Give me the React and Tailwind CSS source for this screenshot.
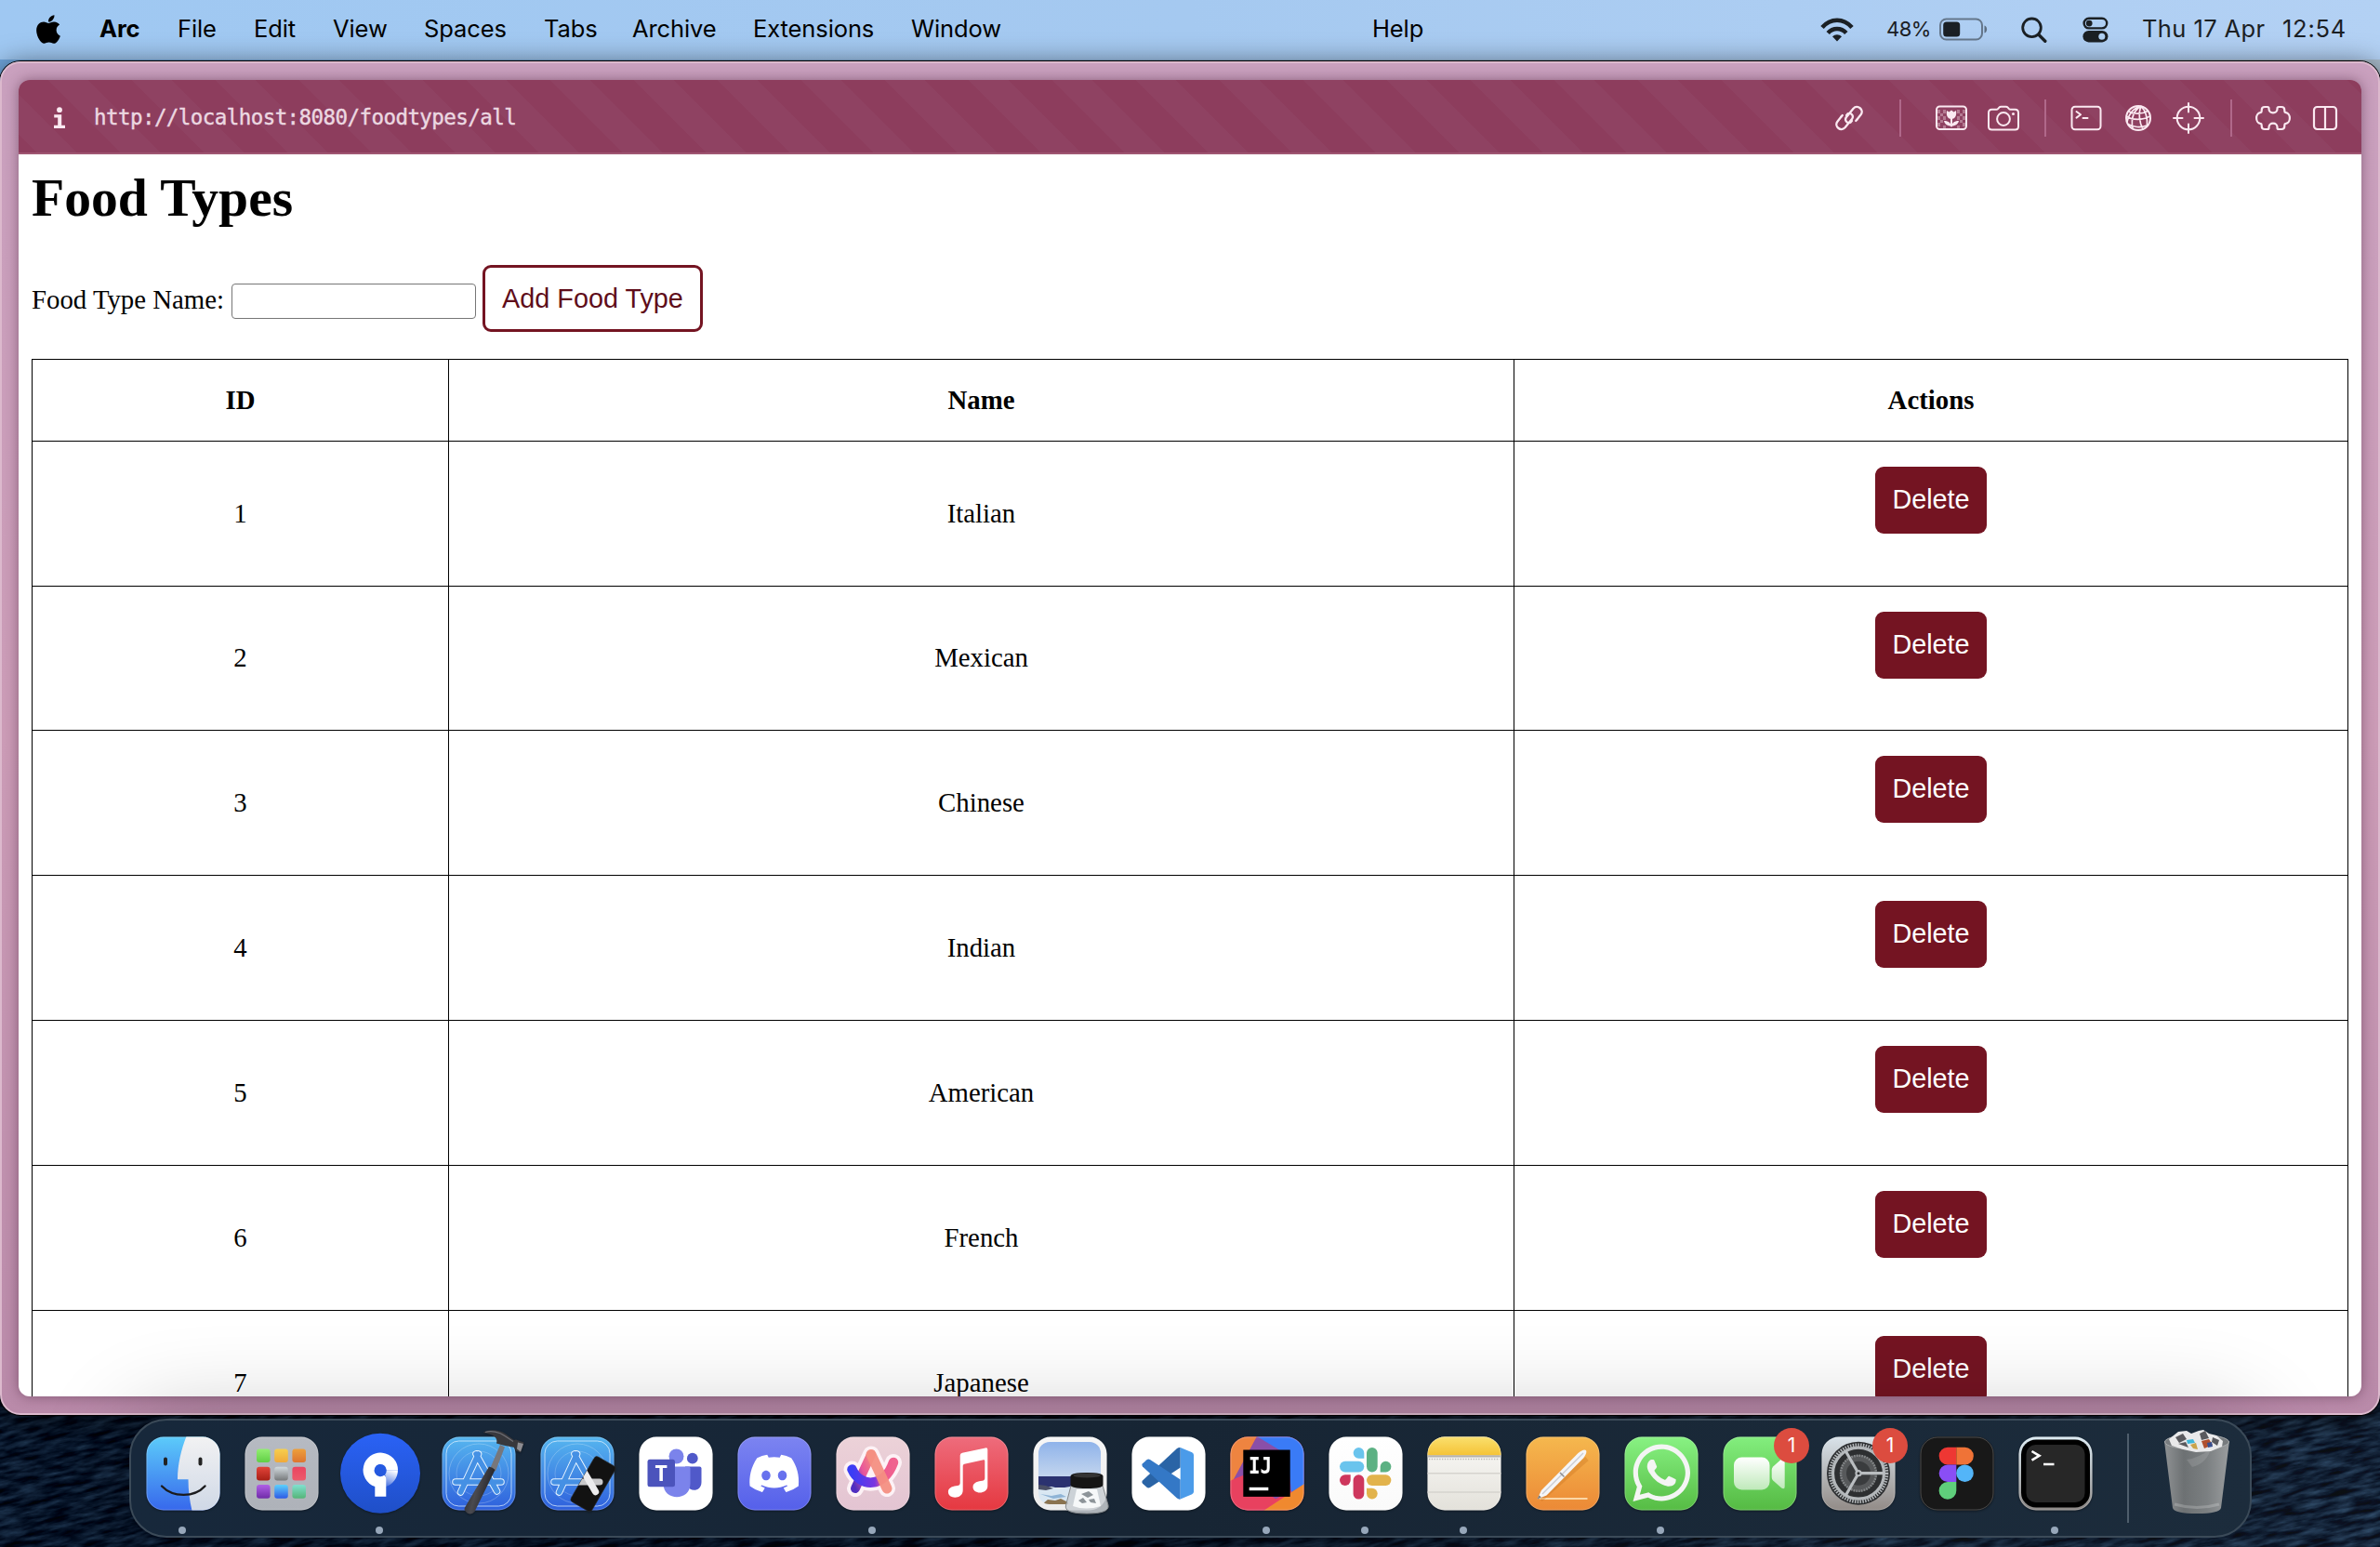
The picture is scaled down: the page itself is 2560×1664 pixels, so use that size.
import React from "react";
import { FaApple, FaWhatsapp, FaDiscord } from "react-icons/fa";

const menus = [
  ["Arc", "w-[84px] font-bold"],
  ["File", "w-[82px]"],
  ["Edit", "w-[85px]"],
  ["View", "w-[98px]"],
  ["Spaces", "w-[129px]"],
  ["Tabs", "w-[95px]"],
  ["Archive", "w-[130px]"],
  ["Extensions", "w-[170px]"],
  ["Window", "w-[496px]"],
  ["Help", "w-[60px]"],
];

const rows = [
  [1, "Italian", "h-[156px]"],
  [2, "Mexican", "h-[155px]"],
  [3, "Chinese", "h-[156px]"],
  [4, "Indian", "h-[156px]"],
  [5, "American", "h-[156px]"],
  [6, "French", "h-[156px]"],
  [7, "Japanese", "h-[156px]"],
];

function MenuBar() {
  return (
    <div className="flex h-[64px] shrink-0 items-center bg-linear-to-r from-[#9fc8f2] via-[#a5c9f0] to-[#b3d1f4] pl-[38px] text-[25.5px] text-black">
      <FaApple className="mr-[41px] h-[35px] w-[28px] -translate-y-px" />
      {menus.map(([label, cls]) => (
        <div key={label} className={"whitespace-nowrap pb-[2px] leading-[60px] tracking-[-0.1px] " + cls}>
          {label}
        </div>
      ))}
      <div className="ml-auto flex items-center pb-px text-[#1b2024]">
        <svg className="h-[28px] w-[36px]" viewBox="0 0 36 28" fill="none" stroke="currentColor" strokeWidth="4.6">
          <path d="M2 11.5C11 1.2 25 1.2 34 11.5" />
          <path d="M8.2 17.5C13.5 11.5 22.5 11.5 27.8 17.5" />
          <path d="M18 26.5l-5-5.2c2.8-2.8 7.2-2.8 10 0z" fill="currentColor" stroke="none" />
        </svg>
        <div className="ml-[35px] w-[57px] whitespace-nowrap text-[22px] tracking-[-0.5px]">48%</div>
        <svg className="h-[26px] w-[52px]" viewBox="0 0 52 26">
          <rect x="1" y="1.5" width="45" height="22" rx="6.5" fill="none" stroke="#1b2024" strokeOpacity=".5" strokeWidth="2" />
          <rect x="4.2" y="4.5" width="18" height="16" rx="3.5" fill="#1b2024" />
          <path d="M48.500 8.500c3.500 1 3.500 7 0 8z" fill="#1b2024" fillOpacity=".55" />
        </svg>
        <svg className="ml-[36px] h-[28px] w-[28px]" viewBox="0 0 28 28" fill="none" stroke="currentColor" strokeWidth="2.8" strokeLinecap="round">
          <circle cx="11.5" cy="11.8" r="9.8" />
          <path d="M18.8 19.2l7 7" strokeWidth="3.4" />
        </svg>
        <svg className="ml-[38px] h-[28px] w-[28px]" viewBox="0 0 28 28">
          <rect x="1.6" y="1.8" width="24.6" height="10.6" rx="5.3" fill="none" stroke="#1b2024" strokeWidth="2.4" />
          <circle cx="7.2" cy="7.1" r="3.4" fill="#1b2024" />
          <rect x=".4" y="15" width="27" height="12.4" rx="6.2" fill="#1b2024" />
          <circle cx="20.8" cy="21.2" r="3.5" fill="#b0d0f2" />
        </svg>
        <div className="ml-[36px] w-[151px] whitespace-nowrap tracking-[0.4px]">Thu 17 Apr</div>
        <div className="w-[105px] whitespace-nowrap tracking-[0.75px]">12:54</div>
      </div>
    </div>
  );
}

function Divider({ className }) {
  return <div className={"h-[40px] w-[2px] bg-[#b0688a] " + className} />;
}

const line = { fill: "none", stroke: "currentColor", strokeWidth: 2, strokeLinecap: "round", strokeLinejoin: "round" };

function Toolbar() {
  return (
    <div className="flex h-[80px] shrink-0 items-center border-b-2 border-[#9f5672] bg-[repeating-linear-gradient(45deg,#8d3d5d_0px,#8d3d5d_14px,#8f4262_14px,#8f4262_44.5px,#8d3d5d_44.5px,#8d3d5d_63.64px)] pt-[3px] text-[#fbe9f1]">
      <svg className="ml-[37px] h-[24px] w-[14px]" viewBox="0 0 14 24" fill="currentColor">
        <circle cx="7" cy="3.2" r="2.9" />
        <path d="M1.2 8.2h8v11.6h3.8v3.2H1v-3.2h4.2v-8.400h-4z" />
      </svg>
      <div className="ml-[30px] whitespace-nowrap font-['DejaVu_Sans_Mono',monospace] text-[22.5px] leading-[75px] tracking-[-0.57px] text-[#ecd8e1] [-webkit-text-stroke:0.4px_#ecd8e1]">
        http://localhost:8080/foodtypes/all
      </div>
      <div className="ml-auto mr-[25px] flex items-center">
        <svg className="h-[30px] w-[30px]" viewBox="0 0 30 30" {...line} strokeWidth="2.3">
          <path d="M16.500 19.500C13 21.500 9.500 17.500 12 14L19.500 4.700C24 0 31.500 6 27.600 11.300L23.500 16.500" />
          <path d="M13.500 10.500C17 8.500 20.500 12.500 18 16L10.500 25.300C6 30-1.500 24 2.400 18.700L6.500 13.500" />
          <path d="M16.500 19.500l1.500-1.500M13.500 10.500L12 12M6.500 13.500l1.300-1.500M23.500 16.500l-1.300 1.500" />
        </svg>
        <Divider className="ml-[39px]" />
        <svg className="ml-[37px] h-[28px] w-[34px]" viewBox="0 0 34 28" {...line}>
          <g fill="#fbe9f1" fillOpacity=".35" stroke="none">
            <path d="M2 5h3v4H2zM5 9h3v3H5zM2 12h3v4H2zM5 16h3v3H5zM2 19h3v4H2zM8 5h3v4H8zM8 12h3v4H8zM23 5h3v4h-3zM26 9h3v3h-3zM29 5h3v4h-3zM23 12h3v4h-3zM29 12h3v4h-3zM26 16h3v3h-3zM29 19h3v4h-3zM8 22h3v3H8zM23 22h3v3h-3z" />
          </g>
          <rect x="1" y="1.500" width="32" height="24.500" rx="3.500" />
          <path d="M12 6l2.500 1.500L17 5.500l2.500 2L22 6c1 6-1.600 9-5 9s-6-3-5-9z" fill="currentColor" stroke="none" />
          <path d="M17 14v8.500" />
          <path d="M17 22.500c-4 0-7-1.500-8-5.500 4 0 7 1.500 8 5.500zM17 22.500c4 0 7-1.500 8-5.500-4 0-7 1.500-8 5.500z" fill="currentColor" stroke="none" />
        </svg>
        <svg className="ml-[22px] h-[28px] w-[34px]" viewBox="0 0 34 28" {...line}>
          <path d="M4.500 4.800h4.800c1 0 1.500-.4 2.200-1.200l.8-.9c.6-.7 1.200-1 2.100-1h5.200c.9 0 1.500.3 2.100 1l.8.9c.7.800 1.200 1.200 2.200 1.200h4.800c2.200 0 3.500 1.300 3.500 3.500v14.700c0 2.200-1.300 3.500-3.500 3.500h-25C2.300 26.500 1 25.200 1 23V8.300c0-2.200 1.300-3.500 3.500-3.500z" />
          <circle cx="17" cy="15" r="6.900" />
          <circle cx="27.500" cy="9.500" r="1.500" fill="currentColor" stroke="none" />
        </svg>
        <Divider className="ml-[27px]" />
        <svg className="ml-[26px] h-[28px] w-[34px]" viewBox="0 0 34 28" {...line}>
          <rect x="1.500" y="1.800" width="31" height="24.400" rx="3.500" />
          <path d="M6.500 7l4.500 3.300-4.500 3.300M13.500 14h5" />
        </svg>
        <svg className="ml-[24px] h-[30px] w-[30px]" viewBox="0 0 30 30" {...line}>
          <circle cx="15" cy="15" r="13" />
          <path d="M18 2.300C10 7 7 16 9 26.500M18 2.300C15 9 16 20 20 27M18 2.300C23 7 25 14 24.500 23.500M18 2.300C12 3 5.500 8 3 19M2.300 13c6 4.500 17.500 4.500 25.200 0M5 8c5 3 14 3 20-.5M4 21.500c5 3.500 14 4 20 1.500" strokeWidth="1.700" />
        </svg>
        <svg className="ml-[22px] h-[34px] w-[34px]" viewBox="0 0 34 34" {...line}>
          <circle cx="17" cy="17" r="12.300" />
          <path d="M17 1v9.500M17 23.500V33M1 17h9.500M23.500 17H33" />
        </svg>
        <Divider className="ml-[28px]" />
        <svg className="ml-[25px] h-[28px] w-[38px]" viewBox="0 0 38 28" {...line} strokeWidth="2.200">
          <path d="M10 2h3c1 0 1.500.5 1.500 1.500v.8c0 2.200 2 4 4.500 4s4.500-1.800 4.500-4v-.8c0-1 .5-1.500 1.500-1.500h3c2 0 3.300 1.300 3.300 3.300v1.200c0 1 .5 1.500 1.500 1.600 2.400.3 4.100 2.900 4.100 5.900s-1.700 5.600-4.100 5.900c-1 .1-1.500.6-1.500 1.600v1.200c0 2-1.300 3.300-3.300 3.300h-3c-1 0-1.500-.5-1.500-1.500v-.8c0-2.200-2-4-4.500-4s-4.500 1.800-4.500 4v.8c0 1-.5 1.500-1.500 1.500h-3c-2 0-3.300-1.300-3.300-3.300v-1.200c0-1-.5-1.500-1.500-1.600C2.800 19.600 1.100 17 1.100 14s1.700-5.600 4.100-5.900c1-.1 1.500-.6 1.500-1.600V5.300C6.700 3.300 8 2 10 2z" />
        </svg>
        <svg className="ml-[23px] h-[28px] w-[28px]" viewBox="0 0 28 28" {...line} strokeWidth="2.200">
          <rect x="2" y="2" width="24" height="24" rx="3.500" />
          <path d="M14 2v24" />
        </svg>
      </div>
    </div>
  );
}

const grid = "grid shrink-0 grid-cols-[448px_1146px_897px] border-t border-black";
const cell = "flex items-center justify-center border-r border-black";

function Page() {
  return (
    <div className="flex min-h-0 flex-1 flex-col overflow-hidden bg-white pl-[14px] font-['Liberation_Serif',serif] text-[28.8px] text-black">
      <h1 className="mt-[14px] h-[66px] shrink-0 text-[57.6px] font-bold leading-[66px]">Food Types</h1>
      <div className="mt-[39px] flex h-[72px] shrink-0 items-center">
        <label className="w-[215px] whitespace-nowrap pt-[4px]">Food Type Name:</label>
        <input className="mt-[6px] h-[38px] w-[263px] rounded-[4px] border border-[#767676] bg-white outline-none" />
        <button className="ml-[7px] h-[72px] w-[237px] rounded-[9px] border-3 border-[#741422] pt-[2px] font-['Liberation_Sans',sans-serif] text-[28.8px] text-[#5f0d1a]">
          Add Food Type
        </button>
      </div>
      <div className="mt-[29px] flex w-[2492px] shrink-0 flex-col border-l border-black">
        <div className={grid + " h-[88px] font-bold"}>
          <div className={cell}>ID</div>
          <div className={cell}>Name</div>
          <div className={cell}>Actions</div>
        </div>
        {rows.map(([id, name, height]) => (
          <div key={id} className={grid + " " + height}>
            <div className={cell}>{id}</div>
            <div className={cell}>{name}</div>
            <div className="flex items-start justify-center border-r border-black pt-[27px]">
              <button className="h-[72px] w-[120px] rounded-[9px] bg-[#741422] font-['Liberation_Sans',sans-serif] text-[28.8px] text-white">
                Delete
              </button>
            </div>
          </div>
        ))}
      </div>
    </div>
  );
}

function Grad({ id, a, b, x2 = 0, y2 = 1 }) {
  return (
    <linearGradient id={id} x1="0" y1="0" x2={x2} y2={y2}>
      <stop offset="0" stopColor={a} />
      <stop offset="1" stopColor={b} />
    </linearGradient>
  );
}

function Tile({ id, a, b, children }) {
  return (
    <>
      <defs>
        <Grad id={id} a={a} b={b} />
        <clipPath id={id + "-clip"}>
          <rect width="79" height="79" x=".5" y=".5" rx="18.500" />
        </clipPath>
      </defs>
      <rect width="79" height="79" x=".5" y=".5" rx="18.500" fill={`url(#${id})`} />
      <g clipPath={`url(#${id}-clip)`}>{children}</g>
      <rect width="78" height="78" x="1" y="1" rx="18" fill="none" stroke="#fff" strokeOpacity=".22" />
    </>
  );
}

function Finder() {
  return (
    <Tile id="finder" a="#5ccbfa" b="#3768ec">
      <defs><Grad id="finder-r" a="#f2f2f3" b="#cfd8e6" /></defs>
      <path d="M43.500 0C38 14 34 30 34 46.300h11.500c0 12 1.500 23 4 33.700H80V0z" fill="url(#finder-r)" />
      <path d="M21 24.500v5M58.500 24.500v5" stroke="#222" strokeWidth="4" strokeLinecap="round" />
      <path d="M17 53.500C29 66 52 66 63.500 53.500" fill="none" stroke="#1b1b1d" strokeWidth="2.400" strokeLinecap="round" />
    </Tile>
  );
}

const padColors = [
  ["#93ee72", "#60cf45"], ["#f6cf4e", "#f0a93a"], ["#eda03c", "#dd7430"],
  ["#e2453a", "#a81f16"], ["#d2dade", "#777a7c"], ["#ea4561", "#ec5a6b"],
  ["#b060e6", "#6f2ca8"], ["#5cd0fb", "#2e5ae6"], ["#80e0cf", "#55b578"],
];

function Launchpad() {
  return (
    <Tile id="pad" a="#b6bac2" b="#aeb2b9">
      {padColors.map(([a, b], i) => (
        <g key={i}>
          <defs><Grad id={"pad" + i} a={a} b={b} /></defs>
          <rect x={13 + (i % 3) * 19.2} y={13.5 + Math.floor(i / 3) * 19.3} width="14.600" height="14.600" rx="3" fill={`url(#pad${i})`} />
        </g>
      ))}
    </Tile>
  );
}

function Sourcetree() {
  return (
    <>
      <defs>
        <Grad id="st" a="#2a62f5" b="#1f4fc8" />
        <linearGradient id="st-f" x1=".6" y1="0" x2=".3" y2="1">
          <stop offset="0" stopColor="#fff" />
          <stop offset="1" stopColor="#fff" stopOpacity=".2" />
        </linearGradient>
      </defs>
      <circle cx="40" cy="39.700" r="43" fill="url(#st)" />
      <path d="M59 36.300A18.700 18.700 0 0 1 46 54V44q0-2-1-2.500 1.800-2 1.800-5.200z" fill="url(#st-f)" />
      <path d="M59 36.300A18.700 18.700 0 1 0 34.300 54v10.700h12V46q0-3.500-2-4.300A6.600 6.600 0 1 1 46.800 36.300z" fill="#fff" />
    </>
  );
}

function Blueprint({ id }) {
  const bars = "M39.500 19L20.500 60M37 19L59.500 59M15 49H64";
  return (
    <Tile id={id} a="#56b6ef" b="#2e5fdc">
      <rect x="5" y="5" width="70" height="70" rx="13.500" fill="none" stroke="#e6f4ff" strokeOpacity=".8" strokeWidth=".9" />
      <circle cx="40" cy="40" r="32" fill="none" stroke="#fff" strokeOpacity=".3" strokeWidth=".8" />
      <circle cx="40" cy="40" r="24" fill="none" stroke="#fff" strokeOpacity=".25" strokeWidth=".8" />
      <path d={bars} stroke="#e8f4ff" strokeWidth="7.600" strokeLinecap="round" />
      <path d={bars} stroke="#4590e4" strokeWidth="5.600" strokeLinecap="round" />
    </Tile>
  );
}

function Xcode() {
  return (
    <>
      <Blueprint id="xc" />
      <defs>
        <linearGradient id="hm" x1="0" x2="1" y1="0" y2=".4">
          <stop offset="0" stopColor="#1c1c20" />
          <stop offset=".5" stopColor="#4a4a50" />
          <stop offset="1" stopColor="#1c1c20" />
        </linearGradient>
      </defs>
      <path d="M52 35L63 9l5 2.500-10 26z" fill="#77777c" />
      <path d="M51 32.500q4 .5 6.500 3.500L35.500 81q-3 4-8 1.500-4-2.500-2.500-6z" fill="url(#hm)" />
      <path d="M44.500-4C50-8 62-7.500 69-2.500l9 6.500 2-.5 8.500 3-3.500 11-5-2-1.500-3.500L66 9.500 59 7.500C61 2 56-2.500 44.500-4z" fill="#38383c" />
      <path d="M47-4.500C53-6.500 62-5 68-.500l9 6" fill="none" stroke="#707076" strokeWidth="1.200" />
      <path d="M82 6.500l6 1.500-3 8.500-4-3z" fill="#8d8d92" />
    </>
  );
}

function Simulator() {
  return (
    <>
      <Blueprint id="sim" />
      <defs>
        <clipPath id="sim-ph">
          <rect x="-13" y="-28" width="26" height="56" rx="3.500" transform="translate(57 51.200) rotate(30)" />
        </clipPath>
      </defs>
      <rect x="-13" y="-28" width="26" height="56" rx="3.500" transform="translate(57 51.200) rotate(30)" fill="#121212" stroke="#2a2a2a" strokeWidth=".6" />
      <g clipPath="url(#sim-ph)" strokeLinecap="round">
        <path d="M30 49H64" stroke="#c9c9cb" strokeWidth="7" />
        <path d="M47 38L59.500 59.500" stroke="#ececee" strokeWidth="7.400" />
      </g>
    </>
  );
}

function Teams() {
  return (
    <Tile id="tm" a="#fff" b="#fff">
      <circle cx="57.800" cy="23.700" r="5.900" fill="#5059c9" />
      <path d="M50 32.500h15.500a2 2 0 0 1 2 2V49c0 11-13 11-15 4z" fill="#5059c9" />
      <circle cx="40.500" cy="21.500" r="8" fill="#7b83eb" />
      <path d="M27 32.500h26.500a2 2 0 0 1 2 2V51c0 19-29 19-29 0z" fill="#7b83eb" />
      <rect x="9.500" y="24.700" width="29.500" height="29.600" rx="2.500" fill="#4b53bc" />
      <text x="24.200" y="47.500" textAnchor="middle" fontFamily="Open Sans, sans-serif" fontWeight="700" fontSize="23" fill="#fff">T</text>
    </Tile>
  );
}

function Discord() {
  return (
    <Tile id="dc" a="#7c84f1" b="#5560ea">
      <FaDiscord x="11" y="11.2" size="57.5" color="#fff" />
    </Tile>
  );
}

function Arc() {
  return (
    <Tile id="arc" a="#ecd2d8" b="#e3c4d2">
      <defs>
        <linearGradient id="arc-s" x1="0" x2="1">
          <stop offset="0" stopColor="#3a3df5" />
          <stop offset=".55" stopColor="#7a35e0" />
          <stop offset=".75" stopColor="#ee5a8e" />
          <stop offset="1" stopColor="#f0628f" />
        </linearGradient>
        <linearGradient id="arc-l" x1="1" y1="0" x2="0" y2="1">
          <stop offset="0" stopColor="#f58a7c" />
          <stop offset=".5" stopColor="#e8559c" />
          <stop offset="1" stopColor="#4f2fc0" />
        </linearGradient>
      </defs>
      <g fill="none" strokeLinecap="round" strokeLinejoin="round">
        <path d="M21 56L38 19.500 55 56M17.500 35.500C26 55 52 56 62 28" stroke="#fdf2f6" strokeWidth="18" />
        <path d="M38 30L30 47h16z" fill="#fdf2f6" stroke="#fdf2f6" strokeWidth="4" />
        <path d="M21 56L38 19.500" stroke="url(#arc-l)" strokeWidth="10" />
        <path d="M17.500 35.500C26 55 52 56 62 28" stroke="url(#arc-s)" strokeWidth="10.500" />
        <path d="M38 19.500L55 56" stroke="#f48f82" strokeOpacity=".95" strokeWidth="11" />
      </g>
    </Tile>
  );
}

function Music() {
  return (
    <Tile id="mu" a="#ee6c7c" b="#e53840">
      <path d="M27.700 20.500q0-2.300 2.300-2.800l25-5.300q2.300-.5 2.300 1.800V53.500c0 9-16 9.500-15.800.8.200-5.300 6-5.800 10-6.600 2-.4 2.800-1 2.800-3V26.500q0-1.500-1.500-1.200l-20.500 4.400q-1.600.4-1.600 2V58c0 10-16 10-15.800 1.500.2-5.300 6-5.800 10-6.600 2-.4 2.800-1 2.800-3z" fill="#fff" />
    </Tile>
  );
}

function Preview() {
  return (
    <>
      <Tile id="pv" a="#f6f6f6" b="#ececec">
        <defs>
          <Grad id="pv-s" a="#8fb3ea" b="#c4d6ee" />
          <clipPath id="pv-c"><rect x="6" y="6" width="67" height="67" rx="12" /></clipPath>
        </defs>
        <g clipPath="url(#pv-c)">
          <rect x="6" y="6" width="68" height="38" fill="url(#pv-s)" />
          <rect x="6" y="43" width="68" height="12" fill="#2b3270" />
          <path d="M6 53l6 2 8-1 8 2 12-2 34 1v19H6z" fill="#d9e7f2" />
          <path d="M6 52l8 1 8 3-8 2-8-1z" fill="#4a4f66" />
          <path d="M10 73l6-5 8 1 6-2 8 4v3z" fill="#8a7350" />
          <path d="M8 62l12 2 10-2 6 3-14 2z" fill="#8fb4d6" />
        </g>
      </Tile>
      <path d="M41 53L35.500 74q-2.500 9 22.500 9t23-9L75 53z" fill="#c9ced2" fillOpacity=".85" stroke="#85898c" strokeWidth="1" />
      <path d="M47 57l-4 18q14 5 30 0l-4-18z" fill="#f6f8f9" />
      <path d="M52 62l8-3 5 4-6 3zM49 69l5-3 4 5-5 1zM60 68l6-1 2 5-6-1z" fill="#8d9499" />
      <path d="M40.500 43q0-4 17.500-4t17.500 4v9q0 4-17.500 4t-17.500-4z" fill="#151515" />
      <ellipse cx="58" cy="42" rx="14.500" ry="2.600" fill="#343434" />
    </>
  );
}

function VSCode() {
  return (
    <Tile id="vs" a="#fff" b="#fff">
      <path d="M52.700 12v21.500L20 55q-2 1-3.500-.2l-4.500-4q-1.500-1.600 0-3.200L49 13q2-1.500 3.700-1z" fill="#2a64a6" />
      <path d="M52.700 67.500v-21L20 25q-2-1-3.500.2l-4.500 4q-1.500 1.600 0 3.200L49 66.500q2 1.500 3.700 1z" fill="#3478c6" />
      <path d="M52.700 12l12.500 5.300q1.800.9 1.800 2.700v39.500q0 1.800-1.800 2.700l-12.500 5.300z" fill="#4b9be9" />
    </Tile>
  );
}

function IntelliJ() {
  return (
    <Tile id="ij" a="#ee4f5c" b="#e93e63">
      <path d="M0 0h29L4 47 0 48z" fill="#ee8440" />
      <path d="M29 0L4 46l30 30 46-26V0z" fill="#8a4fa8" />
      <path d="M4 46l10-4 36 26-14 12H0V48z" fill="#e8415f" />
      <path d="M29 0h51v52L66 60 62 20z" fill="#3a7bf6" />
      <path d="M80 51L36 80h44z" fill="#f0892f" />
      <rect x="14.300" y="14.500" width="50.400" height="50.400" fill="#000" />
      <text x="20" y="40" textLength="25" lengthAdjust="spacingAndGlyphs" fontFamily="DejaVu Sans Mono, monospace" fontWeight="700" fontSize="25.500" fill="#fff">IJ</text>
      <rect x="20.700" y="54.800" width="20.600" height="3.400" fill="#fff" />
    </Tile>
  );
}

function Slack() {
  return (
    <Tile id="sl" a="#fff" b="#fafafa">
      <path d="M32.500 12a5.800 5.800 0 0 1 5.800 5.900v5.800h-5.800A5.850 5.850 0 0 1 32.500 12z" fill="#6ac4ed" />
      <rect x="12" y="26.700" width="26.300" height="11.700" rx="5.850" fill="#6ac4ed" />
      <rect x="41" y="12" width="11.700" height="26.400" rx="5.850" fill="#5cb183" />
      <path d="M55.700 38.400v-5.900a5.850 5.850 0 1 1 5.850 5.900z" fill="#5cb183" />
      <rect x="41" y="41.200" width="26.400" height="11.700" rx="5.850" fill="#e2b34c" />
      <path d="M41 55.700h5.850A5.850 5.850 0 1 1 41 61.550z" fill="#e2b34c" />
      <rect x="26.600" y="41.200" width="11.700" height="26.400" rx="5.850" fill="#ce375d" />
      <path d="M23.700 41.200v5.850a5.850 5.850 0 1 1-5.850-5.850z" fill="#ce375d" />
    </Tile>
  );
}

function Notes() {
  return (
    <Tile id="nt" a="#fbfaf8" b="#e3e1da">
      <defs><Grad id="nt-y" a="#fae06f" b="#f5c336" /></defs>
      <rect width="80" height="20.500" fill="url(#nt-y)" />
      <rect y="20.300" width="80" height="2.200" fill="#b5b3ae" />
      <path d="M2 24.500h76" stroke="#b9b7b3" strokeWidth="1.300" strokeDasharray="1.300 1.500" />
      <path d="M0 39.800h80M0 60h80" stroke="#d5d3ce" strokeWidth="1.600" />
    </Tile>
  );
}

function Pages() {
  return (
    <Tile id="pg" a="#f5b84e" b="#ec8936">
      <path d="M15 67h51.500" stroke="#fbd7a6" strokeWidth="2.200" />
      <path d="M16 68L66 24" stroke="#c8741f" strokeOpacity=".35" strokeWidth="5" />
      <path d="M12.500 67.500l4.500-9.500L56.500 18q6-5 8.500-3 1.500 2.500-3 8.500L22.500 63.500z" fill="#f5f5f7" />
      <path d="M18 62L62 18" stroke="#c9cbd2" strokeWidth="1.200" />
      <path d="M37 39l4.500 4.500" stroke="#8e8e92" strokeWidth="1.600" />
      <path d="M12.500 67.500l2-4.300 2.300 2.300z" fill="#7c7c7c" />
    </Tile>
  );
}

function WhatsApp() {
  return (
    <Tile id="wa" a="#88f283" b="#56bc44">
      <FaWhatsapp x="5.1" y="4.2" size="70.3" color="#f4f5f4" />
    </Tile>
  );
}

function FaceTime() {
  return (
    <Tile id="ft" a="#83ee7e" b="#55ba43">
      <defs><Grad id="ft-w" a="#ffffff" b="#bfe9ba" /></defs>
      <rect x="12" y="22.500" width="38.500" height="35" rx="8.500" fill="url(#ft-w)" />
      <path d="M52.700 36q0-2 1.500-3.500l9-8q3.500-2 3.500 1.500v28q0 3.500-3.500 1.500l-9-8Q52.700 46 52.700 44z" fill="url(#ft-w)" />
    </Tile>
  );
}

function Settings() {
  return (
    <Tile id="se" a="#d9e3ea" b="#928b87">
      <circle cx="40" cy="39.700" r="34" fill="#2d2f31" />
      <circle cx="40" cy="39.700" r="30.500" fill="none" stroke="#b3b7ba" strokeWidth="3.600" strokeDasharray="1.500 1.300" />
      <circle cx="40" cy="39.700" r="27.500" fill="none" stroke="#b3b7ba" strokeWidth="3.200" />
      <circle cx="40" cy="39.700" r="20" fill="#57595b" />
      <circle cx="40" cy="39.700" r="19" fill="none" stroke="#85888a" strokeWidth="2.500" strokeDasharray="1.500 1.300" />
      <circle cx="40" cy="39.700" r="13" fill="#3a3c3e" />
      <path d="M40 39.700h28M40 39.700L26 15.500M40 39.700L26 64" stroke="#b9bdc0" strokeWidth="3.200" />
      <circle cx="40" cy="39.700" r="3.600" fill="#b9bdc0" />
      <circle cx="40" cy="39.700" r="1.500" fill="#2d2f31" />
    </Tile>
  );
}

function Figma() {
  return (
    <Tile id="fg" a="#1e1e1e" b="#141414">
      <rect width="80" height="80" fill="#181818" />
      <path d="M39.300 11.700H30a9.350 9.350 0 0 0 0 18.700h9.300z" fill="#ee3733" />
      <path d="M39.300 11.700h9.200a9.350 9.350 0 0 1 0 18.700h-9.200z" fill="#f07337" />
      <path d="M39.300 30.400H30a9.350 9.350 0 0 0 0 18.700h9.300z" fill="#8a4ef5" />
      <circle cx="48.500" cy="39.700" r="9.300" fill="#53b5f8" />
      <path d="M39.300 49.100H30a9.350 9.350 0 1 0 9.300 9.350z" fill="#5fce7b" />
      <rect width="78" height="78" x="1" y="1" rx="18" fill="none" stroke="#181818" strokeWidth="2" />
    </Tile>
  );
}

function Terminal() {
  return (
    <Tile id="te" a="#dcebf3" b="#8b8785">
      <rect x="3" y="3.500" width="74" height="73" rx="16" fill="#000" />
      <rect x="8.500" y="9" width="63" height="62" rx="10" fill="#272727" />
      <path d="M14.500 16l8 4.800-8 4.800" fill="none" stroke="#fff" strokeWidth="2.600" />
      <path d="M27 30h11.500" stroke="#fff" strokeWidth="2.600" />
    </Tile>
  );
}

function Trash() {
  return (
    <svg className="ml-[38px] -mt-[7px] h-[92px] w-[70px] overflow-visible" viewBox="0 0 70 92">
      <defs>
        <linearGradient id="tr" x1="0" x2="1">
          <stop offset="0" stopColor="#8f9294" />
          <stop offset=".3" stopColor="#6d7173" />
          <stop offset=".65" stopColor="#7b7f81" />
          <stop offset="1" stopColor="#9a9d9f" />
        </linearGradient>
      </defs>
      <path d="M0 12h70L61 84q-2 6-26 6T9 84z" fill="url(#tr)" />
      <ellipse cx="35" cy="13" rx="34.500" ry="8" fill="#777b7e" stroke="#a7aaac" />
      <path d="M5 10l10-8 9-1 5 3 8-3 5-1 6 4 8 2 7 6-1 6-12 5-16 1-14-3-12-4z" fill="#e9e9ea" />
      <path d="M12 8l8-4 4 6-8 4zM38 4l6-3 4 8-8 2zM52 8l7 3-2 6-6-4zM15 15l8-2 3 6z" fill="#5a5a5e" />
      <path d="M24 11l7-1 2 4-8 1z" fill="#3fb6d8" />
      <path d="M40 12l8-2 4 6-9 4z" fill="#b0502e" />
      <path d="M46 14l5-1 1 5-5 1z" fill="#38508f" />
      <path d="M28 16l6-2 2 7-5-1z" fill="#c9a34a" />
      <path d="M24 32q14-2 26-12-4 16-20 20z" fill="#fff" fillOpacity=".12" />
      <path d="M11 80q24 7 48 0" fill="none" stroke="#fff" strokeOpacity=".2" strokeWidth="3" />
    </svg>
  );
}

const apps = [
  { Icon: Finder, dot: true },
  { Icon: Launchpad },
  { Icon: Sourcetree, dot: true },
  { Icon: Xcode },
  { Icon: Simulator },
  { Icon: Teams },
  { Icon: Discord },
  { Icon: Arc, dot: true },
  { Icon: Music },
  { Icon: Preview },
  { Icon: VSCode },
  { Icon: IntelliJ, dot: true },
  { Icon: Slack, dot: true },
  { Icon: Notes, dot: true },
  { Icon: Pages },
  { Icon: WhatsApp, dot: true },
  { Icon: FaceTime, badge: 1 },
  { Icon: Settings, badge: 1 },
  { Icon: Figma },
  { Icon: Terminal, dot: true },
];

function Dock() {
  return (
    <div className="relative ml-[139px] mt-[4px] flex h-[128px] w-[2283px] shrink-0 items-start rounded-[40px] border-2 border-[#3b4a58] bg-linear-to-r from-[#17283b] via-[#172534] to-[#1c2c3c] pl-[16px] pt-[17px] shadow-[0_0_100px_rgba(0,0,0,0.24)]">
      <div className="flex gap-[26px]">
        {apps.map(({ Icon, dot, badge }, i) => (
          <div key={i} className="relative flex w-[80px] flex-col items-center">
            <svg className="h-[80px] w-[80px] overflow-visible drop-shadow-[0_1px_1px_rgba(0,0,0,0.35)]" viewBox="0 0 80 80">
              <Icon />
            </svg>
            {dot && <div className="mr-[2px] mt-[17px] h-[8px] w-[8px] rounded-full bg-[#97a7ba]" />}
            {badge && (
              <div className="absolute -right-[13px] -top-[9px] flex h-[38px] w-[38px] items-center justify-center rounded-full bg-[#dc4c3f] text-[21px] text-white">
                {badge}
              </div>
            )}
          </div>
        ))}
      </div>
      <div className="-mt-[3px] ml-[37px] h-[96px] w-[2px] bg-[#4f5e6c]" />
      <Trash />
    </div>
  );
}

function Wallpaper() {
  return (
    <svg className="absolute inset-x-0 bottom-0 h-[264px] w-[2560px]" viewBox="0 0 2560 264">
      <defs>
        <filter id="water" x="0" y="0" width="100%" height="100%" colorInterpolationFilters="sRGB">
          <feTurbulence type="fractalNoise" baseFrequency="0.035 0.17" numOctaves="4" seed="7" />
          <feColorMatrix values="0.35 0 0 0 -0.14  0.5 0 0 0 -0.165  0.6 0 0 0 -0.14  0 0 0 0 1" />
        </filter>
        <linearGradient id="shade">
          <stop offset="0" stopColor="#001026" stopOpacity=".2" />
          <stop offset=".5" stopColor="#000712" stopOpacity=".4" />
          <stop offset="1" stopColor="#5a7a98" stopOpacity=".12" />
        </linearGradient>
      </defs>
      <rect width="2560" height="264" fill="#061526" />
      <g transform="rotate(-12 1280 132)">
        <rect x="-100" y="-400" width="2760" height="1064" filter="url(#water)" />
      </g>
      <rect width="2560" height="264" fill="url(#shade)" />
    </svg>
  );
}

export default function App() {
  return (
    <div className="relative flex h-[1664px] w-[2560px] flex-col overflow-hidden bg-linear-to-r from-[#6fa5db] to-[#a9bccb] font-['Inter',sans-serif]">
      <Wallpaper />
      <MenuBar />
      <div className="relative mt-[2px] flex h-[1456px] shrink-0 flex-col rounded-[22px] border-2 border-[#dcb9cd] bg-linear-to-b from-[#c9a0be] via-[#cb9bb6] to-[#b98aa9] px-[18px] pb-[18px] pt-[18px] shadow-[0_0_0_1px_#000,0_4px_30px_rgba(0,0,0,0.6)]">
        <div className="flex min-h-0 flex-1 flex-col overflow-hidden rounded-[12px] shadow-[0_0_14px_rgba(60,20,45,0.45)]">
          <Toolbar />
          <Page />
        </div>
      </div>
      <Dock />
    </div>
  );
}
